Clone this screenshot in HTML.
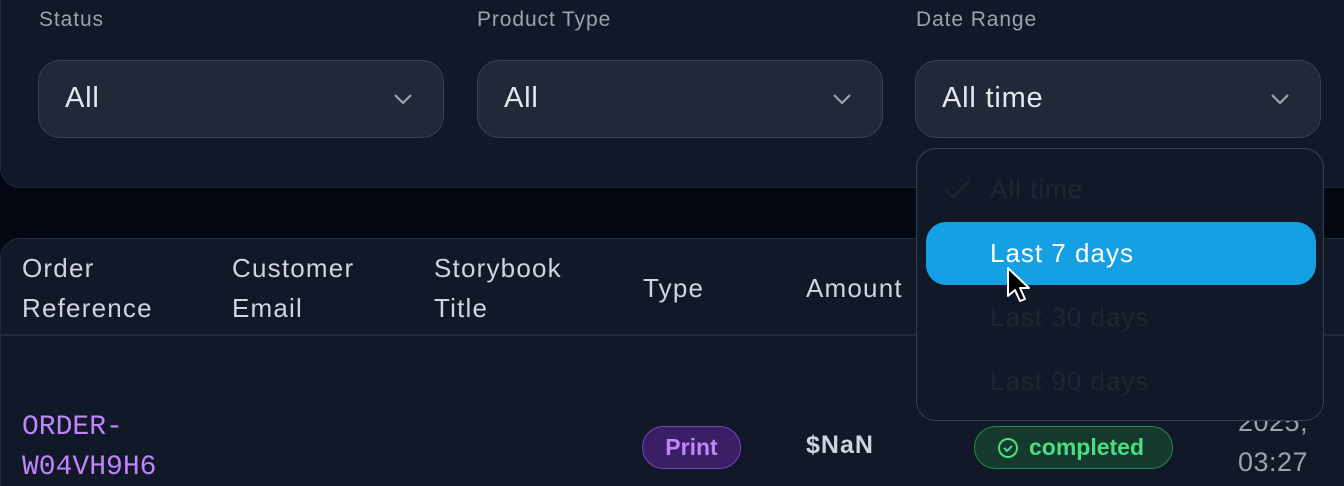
<!DOCTYPE html>
<html><head><style>
*{box-sizing:border-box;margin:0;padding:0}
html,body{width:1344px;height:486px;overflow:hidden}
body{background:#030712;font-family:"Liberation Sans",sans-serif;position:relative}
.panel{position:absolute;left:0;top:-40px;width:1400px;height:228px;background:#111827;border:1px solid #1f2a3a;border-radius:20px}
.lbl{position:absolute;top:8px;font-size:21px;letter-spacing:0.9px;color:#9ca3af}
.sel{position:absolute;top:60px;width:406px;height:78px;background:#1f2937;border:1.5px solid #374151;border-radius:22px;color:#e5e7eb;font-size:29px;letter-spacing:0.8px;padding:21px 0 0 26px}
.sel svg{position:absolute;right:30px;top:32px}
.table{position:absolute;left:0;top:238px;width:1400px;height:248px;background:#111827;border:1px solid #1f2a3a;border-bottom:none;border-radius:20px 20px 0 0}
.hline{position:absolute;left:0;top:334px;width:1344px;height:1.5px;background:#1f2a3a}
.th{position:absolute;font-size:26px;letter-spacing:1.2px;color:#d1d5db;line-height:40px}
.mono{position:absolute;left:22px;top:408px;font-family:"Liberation Mono",monospace;font-size:28px;color:#c084fc;line-height:40px}
.print{position:absolute;left:642px;top:426px;width:99px;height:43px;border:1.5px solid #7e3fbf;background:#3b1f66;border-radius:22px;color:#c084fc;font-size:23px;font-weight:bold;text-align:center;line-height:40px}
.amt{position:absolute;left:806px;top:431px;font-size:25px;letter-spacing:1px;font-weight:bold;color:#cbd5e1}
.comp{position:absolute;left:974px;top:426px;width:199px;height:43px;border:1.5px solid #1f8a4c;background:#173a2e;border-radius:22px;color:#4ade80;font-size:23px;font-weight:bold;line-height:40px;padding-left:54px}
.comp svg{position:absolute;left:22px;top:10px}
.date{position:absolute;left:1238px;top:362px;font-size:27px;letter-spacing:0.5px;color:#9ca3af;line-height:40px}
.dd{position:absolute;left:916px;top:148px;width:408px;height:273px;background:#111827;border:1.5px solid #374151;border-radius:20px}
.it{position:absolute;left:73px;font-size:26px;letter-spacing:1px;color:#1f2633}
.hl{position:absolute;left:9px;top:73px;width:390px;height:63px;background:#14a0e3;border-radius:20px;color:#fff;font-size:26px;letter-spacing:1px;padding:16px 0 0 64px}
</style></head><body>
<div class="panel"></div>
<div class="lbl" style="left:39px">Status</div>
<div class="lbl" style="left:477px">Product Type</div>
<div class="lbl" style="left:916px">Date Range</div>
<div class="sel" style="left:38px">All<svg width="20" height="12"><path d="M2 2l8 8 8-8" stroke="#9ca3af" stroke-width="2.2" fill="none"/></svg></div>
<div class="sel" style="left:477px">All<svg width="20" height="12"><path d="M2 2l8 8 8-8" stroke="#9ca3af" stroke-width="2.2" fill="none"/></svg></div>
<div class="sel" style="left:915px">All time<svg width="20" height="12"><path d="M2 2l8 8 8-8" stroke="#9ca3af" stroke-width="2.2" fill="none"/></svg></div>
<div class="table"></div>
<div class="hline"></div>
<div class="th" style="left:22px;top:248px">Order<br>Reference</div>
<div class="th" style="left:232px;top:248px">Customer<br>Email</div>
<div class="th" style="left:434px;top:248px">Storybook<br>Title</div>
<div class="th" style="left:643px;top:268px">Type</div>
<div class="th" style="left:806px;top:268px">Amount</div>
<div class="mono">ORDER-<br>W04VH9H6</div>
<div class="print">Print</div>
<div class="amt">$NaN</div>
<div class="comp"><svg width="22" height="22"><circle cx="11" cy="11" r="9" stroke="#4ade80" stroke-width="2" fill="none"/><path d="M7 11l3 3 5-5" stroke="#4ade80" stroke-width="2" fill="none"/></svg>completed</div>
<div class="date">&nbsp;&nbsp;&nbsp;&nbsp;&nbsp;&nbsp;&nbsp;,<br>2025,<br>03:27</div>
<div class="dd">
<svg style="position:absolute;left:26px;top:30px" width="28" height="20"><path d="M2 10l8 8 16-16" stroke="#1f2633" stroke-width="2.5" fill="none"/></svg>
<div class="it" style="top:25px">All time</div>
<div class="hl">Last 7 days</div>
<div class="it" style="top:153px">Last 30 days</div>
<div class="it" style="top:217px">Last 90 days</div>
<svg style="position:absolute;left:88px;top:117px" width="26" height="38"><path d="M3 2v28l7-6 5 11 5-2-5-11h9z" fill="#000" stroke="#fff" stroke-width="2" stroke-linejoin="round"/></svg>
</div>
</body></html>
